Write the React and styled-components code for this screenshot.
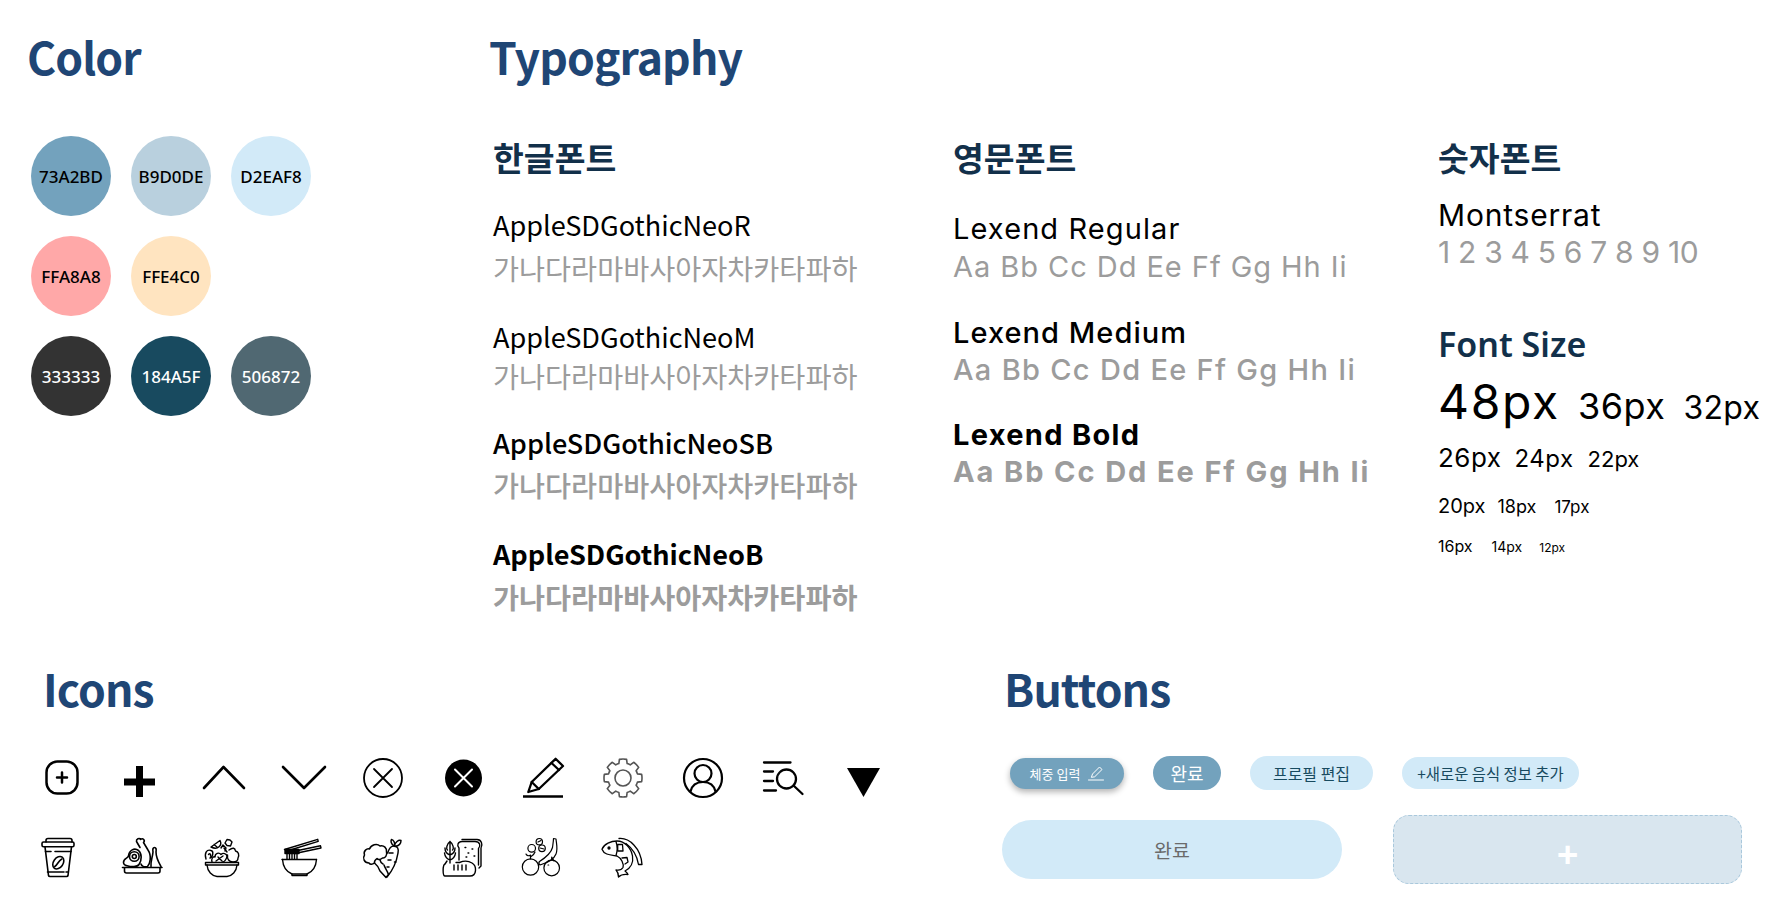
import React from "react";
import styled, { createGlobalStyle } from "styled-components";

const KR = `"Noto Sans CJK KR", "Noto Sans", sans-serif`;
const LATIN = `"Noto Sans", "Noto Sans CJK KR", sans-serif`;
const GEO = `Inter, "Noto Sans", sans-serif`;

const Global = createGlobalStyle`
  html, body { margin: 0; padding: 0; background: #fff; }
  * { box-sizing: border-box; }
`;

const Page = styled.div`
  width: 1765px;
  height: 903px;
  overflow: hidden;
  padding: 27px 0 0 27px;
  font-family: ${KR};
  color: #000;
`;
const Top = styled.div`
  display: flex;
  height: 632px;
`;
const ColorCol = styled.section`
  width: 462px;
  flex: none;
`;
const Title = styled.h1`
  margin: 0;
  font-family: ${KR};
  font-size: 44.5px;
  line-height: 58px;
  font-weight: 700;
  letter-spacing: -0.9px;
  color: #1f4675;
`;
const Swatches = styled.div`
  display: grid;
  grid-template-columns: repeat(3, 80px);
  gap: 20px;
  margin: 51px 0 0 4px;
`;
const Swatch = styled.div`
  width: 80px;
  height: 80px;
  border-radius: 50%;
  background: ${(p) => p.$bg};
  color: ${(p) => p.$fg};
  display: flex;
  align-items: center;
  justify-content: center;
  font-family: ${LATIN};
  font-size: 17px;
  font-weight: 500;
  grid-column: ${(p) => p.$col || "auto"};
`;
const TypeCol = styled.section`
  flex: 1;
  min-width: 0;
`;
const FontCols = styled.div`
  display: flex;
  margin: 50px 0 0 4px;
`;
const FontCol = styled.div`
  width: ${(p) => p.$w}px;
  flex: none;
`;
const Sub = styled.h2`
  margin: 0;
  font-family: ${KR};
  font-size: 33.5px;
  line-height: 44px;
  font-weight: 700;
  color: #12304a;
`;
const KName = styled.div`
  font-family: ${KR};
  font-size: 27.1px;
  line-height: 40px;
  font-weight: ${(p) => p.$w};
  color: #000;
  white-space: nowrap;
  margin-top: ${(p) => p.$mt}px;
`;
const KGlyphs = styled.div`
  font-family: ${KR};
  font-size: 28.3px;
  line-height: 40px;
  font-weight: ${(p) => p.$w};
  color: #9c9c9c;
  white-space: nowrap;
  margin-top: ${(p) => p.$mt}px;
`;
const EName = styled.div`
  font-family: ${GEO};
  font-size: 29px;
  line-height: 40px;
  font-weight: ${(p) => p.$w};
  letter-spacing: ${(p) => p.$ls}px;
  white-space: nowrap;
  margin-top: ${(p) => p.$mt}px;
`;
const EGlyphs = styled.div`
  font-family: ${GEO};
  font-size: 29px;
  line-height: 40px;
  font-weight: ${(p) => p.$w};
  letter-spacing: ${(p) => p.$ls}px;
  color: #9c9c9c;
  white-space: nowrap;
  margin-top: ${(p) => p.$mt}px;
`;
const Mont = styled.div`
  font-family: ${GEO};
  font-size: 30px;
  line-height: 36px;
  letter-spacing: 0.8px;
  margin-top: 18px;
`;
const Numbers = styled.div`
  font-family: ${GEO};
  font-size: 30px;
  line-height: 36px;
  color: #9c9c9c;
  letter-spacing: -0.3px;
  white-space: nowrap;
  margin-top: 1px;
`;
const SizeTitle = styled.h2`
  margin: 52px 0 0;
  font-family: ${LATIN};
  font-size: 34px;
  line-height: 44px;
  font-weight: 600;
  color: #12304a;
`;
const SizeRow = styled.div`
  display: flex;
  align-items: baseline;
  font-family: ${GEO};
  height: ${(p) => p.$h}px;
  margin-top: ${(p) => p.$mt}px;
  white-space: nowrap;
`;
const Size = styled.span`
  font-size: ${(p) => p.$s}px;
  letter-spacing: ${(p) => p.$ls || 0}px;
  margin-left: ${(p) => p.$ml || 0}px;
  line-height: 1;
`;

const Bottom = styled.div`
  display: flex;
`;
const IconsCol = styled.section`
  width: 977px;
  flex: none;
  padding-left: 16px;
`;
const ButtonsCol = styled.section``;
const IconGrid = styled.div`
  display: grid;
  grid-template-columns: repeat(11, 40px);
  grid-auto-rows: 40px;
  gap: 40px;
  margin-top: 41px;
`;
const Glyph = styled.svg`
  width: 40px;
  height: 40px;
  overflow: visible;
  display: block;
  fill: none;
  stroke: ${(p) => p.$stroke || "#000"};
  stroke-width: ${(p) => p.$sw || 1.5};
  stroke-linecap: round;
  stroke-linejoin: round;
`;
const SmallGlyph = styled(Glyph)`
  width: 16px;
  height: 16px;
`;
const PillRow = styled.div`
  display: flex;
  align-items: center;
  gap: 29px;
  margin: 39px 0 0 6px;
  height: 34px;
`;
const Pill = styled.button`
  border: 0;
  padding: 0;
  display: flex;
  align-items: center;
  justify-content: center;
  gap: ${(p) => p.$gap || 0}px;
  width: ${(p) => p.$w}px;
  height: ${(p) => p.$h}px;
  border-radius: 999px;
  background: ${(p) => p.$bg};
  color: ${(p) => p.$fg};
  font-family: ${KR};
  font-size: ${(p) => p.$fs}px;
  font-weight: ${(p) => p.$fw || 400};
  box-shadow: ${(p) => (p.$raised ? "0 3px 6px rgba(0,0,0,.3)" : "none")};
  white-space: nowrap;
`;
const BigRow = styled.div`
  display: flex;
  align-items: center;
  gap: 51px;
  margin: 25px 0 0 -2px;
`;
const Wide = styled.button`
  width: 340px;
  height: 59px;
  border: 0;
  border-radius: 30px;
  background: #d2eaf8;
  color: #6b6b6b;
  font-family: ${KR};
  font-size: 19.5px;
`;
const Dashed = styled.button`
  width: 349px;
  height: 69px;
  border: 1.5px dashed #a9c8dc;
  border-radius: 16px;
  background: #d9e6ef;
  color: #fff;
  font-family: ${LATIN};
  font-size: 38px;
  font-weight: 700;
  line-height: 1;
  padding: 6px 0 0;
`;

const gearPath = (() => {
  const n = 8;
  const pol = (r, a) => `${(20 + r * Math.cos(a)).toFixed(2)} ${(20 + r * Math.sin(a)).toFixed(2)}`;
  let d = "";
  for (let i = 0; i < n; i++) {
    const c = (i * 2 * Math.PI) / n - Math.PI / 2;
    const w = 0.19;
    const s = 0.28;
    const p1 = pol(15, c - s);
    const p2 = pol(19, c - w);
    const p3 = pol(19, c + w);
    const p4 = pol(15, c + s);
    const nextStart = pol(15, c + (2 * Math.PI) / n - s);
    d += `${i === 0 ? "M" + p1 : ""} L${p2} A19 19 0 0 1 ${p3} L${p4} A15 15 0 0 1 ${nextStart} `;
  }
  return d + "Z";
})();

const icons = [
  <Glyph key="a" viewBox="0 0 40 40" $sw={2.5}>
    <rect x="3.500" y="3.500" width="31" height="32" rx="11" />
    <path d="M19 14.500v10M14 19.500h10" />
  </Glyph>,
  <Glyph key="b" viewBox="0 0 40 40" $stroke="none">
    <path d="M13 8h7v12.500h12v7H20V39h-7V27.500H1v-7h12z" fill="#000" />
  </Glyph>,
  <Glyph key="c" viewBox="0 0 40 40" $sw={2.6}>
    <path d="M1 30 20.500 9 41 30" />
  </Glyph>,
  <Glyph key="d" viewBox="0 0 40 40" $sw={2.6}>
    <path d="M0 9 21 30 42 9" />
  </Glyph>,
  <Glyph key="e" viewBox="0 0 40 40" $sw={1.8}>
    <circle cx="20" cy="20" r="19" />
    <path d="M11 11 29 29M29 11 11 29" />
  </Glyph>,
  <Glyph key="f" viewBox="0 0 40 40" $stroke="#fff" $sw={2}>
    <circle cx="20.500" cy="20" r="18.500" fill="#000" stroke="none" />
    <path d="M12 11.500 29 28.500M29 11.500 12 28.500" />
  </Glyph>,
  <Glyph key="g" viewBox="0 0 40 40" $sw={2.3}>
    <path d="M5.300 34 8.700 24 32.600.8 40 8 15.800 31Z" />
    <path d="M8.700 24 15.800 31M28.500 5 36 12" />
    <path d="M0 38.500H40" strokeLinecap="butt" />
  </Glyph>,
  <Glyph key="h" viewBox="0 0 40 40" $stroke="#555" $sw={1.6}>
    <path d={gearPath} />
    <circle cx="20" cy="20" r="8" />
  </Glyph>,
  <Glyph key="i" viewBox="0 0 40 40" $sw={2.2}>
    <circle cx="20" cy="20" r="19" />
    <circle cx="20" cy="15.500" r="8.500" />
    <path d="M7.500 33.500C9 27 13.500 24 20 24S31 27 32.500 33.500" />
  </Glyph>,
  <Glyph key="j" viewBox="0 0 40 40" $sw={2.3}>
    <path d="M1 4.500H27.500M1 13.500H10M1 23H10M1 32.500H13" />
    <circle cx="23.500" cy="21" r="9.500" />
    <path d="M30.500 27.500 39.500 36" />
  </Glyph>,
  <Glyph key="k" viewBox="0 0 40 40" $stroke="none">
    <path d="M4 10H37L20.500 39Z" fill="#000" />
  </Glyph>,
  /* coffee */
  <Glyph key="l" viewBox="0 0 40 40" $sw={1.6}>
    <path d="M3 4V2.500Q3 .5 5 .5H27Q29 .5 29 2.500V4" />
    <rect x="-1" y="4" width="32" height="4.800" rx="1.500" />
    <path d="M2 8.800 5.500 37.500Q5.700 38.500 7 38.500H23.500Q24.800 38.500 25 37.500L28.500 8.800" />
    <path d="M2.500 13.500H8M12 13.500H28M4.500 34H21M23 34H25" />
    <ellipse cx="15.300" cy="24.700" rx="4.800" ry="6.800" transform="rotate(35 15.300 24.700)" />
    <path d="M11.800 28.500C15 26.500 15 23 18.800 21" />
  </Glyph>,
  /* meat */
  <Glyph key="m" viewBox="0 0 40 40" $sw={1.6}>
    <path d="M-.5 29.500H39M1.500 29.500V33Q1.500 35 3.500 35H35Q37 35 37 33V29.500" />
    <path d="M.5 24.500C.5 20 5 20.500 5.500 18C6 12 11.500 9.500 15.500 12.500C19 15.500 19 22 16 26.500C14.500 29 8 29 5 28C2.500 27.500.5 27 .5 24.500Z" />
    <circle cx="11.300" cy="18.500" r="4.800" />
    <circle cx="11.300" cy="18.500" r="2" />
    <path d="M17 9.500 13.500 3.500C13 1 16.500-.5 17.500 1.500C20-.5 22.500 2.500 20.500 4.500L25 12C29 18 27 26 24.500 28.500C21 29.500 18.500 28 18 26" />
    <path d="M28 28.500C27.500 22 29.500 20 30 14C29.500 11 30 9.500 31.500 9.500S33.500 11 33 14C33 20 36 25 38 28.500" />
  </Glyph>,
  /* salad */
  <Glyph key="n" viewBox="0 0 40 40" $sw={1.4}>
    <path d="M2.500 24.500H35.500V27H2.500Z" />
    <path d="M4 27C4.500 33.500 9 38 14 38.500H24C29 38 33.500 33.500 34 27" />
    <path d="M8 9 17 2.500C19.500 7 15 12.500 8 9ZM11 6.500 14 9" />
    <path d="M3 21C1 15 4 11 8 12.500C11 13 10 19 7 20M5.500 16.500C6.500 15 8 16 7.500 18" />
    <path d="M9 24C8 21 10 18 12 19C12 15 16 14 18 16.500C20 14.500 23.500 15.500 24 18C24 21 21 24 20 24M13 23 20 18M15 19 19 23" />
    <path d="M22 5 24 1.500 27 2 29 4 27.500 8 24 7.500Z" />
    <path d="M21 10 24 14M26 12C30 9 32 10 32.500 13C35.500 13.500 36.500 17 35 20C35 23 32.500 24 30 24C26 24 24 21 24.500 17" />
    <path d="M18 10 20 7 23 10 22 13" />
  </Glyph>,
  /* noodles */
  <Glyph key="o" viewBox="0 0 40 40" $sw={1.4}>
    <path d="M1.500 11.500 34.700 1.300 35.200 3.300 4 13M3 15 37.500 7.800 38 10 12 15.500" />
    <path d="M2 11.500H16V15.500H2Z" fill="#000" />
    <path d="M4 15V21M6.500 15V21M9 15V21M11.500 15V21M14 15V21" />
    <path d="M-1 21.500H33.500" />
    <path d="M-.5 21.500C0 29 4 34 9 36H24C29 34 33 29 33.500 21.500" />
    <path d="M9 36V37.500H24V36" />
  </Glyph>,
  /* broccoli + carrot */
  <Glyph key="p" viewBox="0 0 40 40" $sw={1.5}>
    <path d="M6 25C1 25-.5 20 1.500 17C0 13 4 10 6.500 11C8 6.500 14 5 17 8C21 7 24 10 23.500 14C24.500 17 22 20.500 19.500 20C17 22 15 22 14 20.500C12 22 11 23 11.500 25C9 27 7 26.500 6 25Z" />
    <path d="M11.500 25C14 27 16 30 17 33L23 39.500 25.500 36.500C24 32 22 30 21 27" />
    <path d="M17 22C17.500 24 18.500 25.500 20 26" />
    <path d="M24.500 15C26.500 9.500 28 8 31 8C34.500 8 36 11 35 15C33.500 24 30 32 24 39" />
    <path d="M26 15H30M25 22H28M31.500 24H33M24 29H26" />
    <path d="M31 8C28 6 27.500 3 28.500 1.500C31 2 32 5 31.500 7.500C32 4.500 35.500 1.500 38 2.500C38 6 35 8 32 8.500" />
  </Glyph>,
  /* bread */
  <Glyph key="q" viewBox="0 0 40 40" $sw={1.4}>
    <path d="M7 3.500C3.500 6 3 11 4.500 12M7 3.500C10.500 6 11 11 9.500 12M2 10C2 13 4 16 7 17C10 16 12 13 12 10M1.500 15C2 19 4 21 7 22C10 21 12 19 12.500 15M7 5V25" />
    <path d="M4 23 2 26C-.5 27 -.5 38 2 38H27C34 38 34 28 29 25 25 22.500 20 23 16.500 24.500H13" />
    <path d="M11 27V32M15 27V32M19 27V32M23 27V32" />
    <path d="M16 22V10C13.500 7.500 15 3.500 19 3.500H32C37 3.500 38 8 35.500 10.500V27" />
    <path d="M19 1.500H34C38.500 1.500 40 6.500 38 10V28L36 30" />
    <path d="M22 9.500h.8M29 11h.8M25 15h.8M31 18h.8M23 19h.8" />
  </Glyph>,
  /* fruit */
  <Glyph key="r" viewBox="0 0 40 40" $sw={1.2}>
    <circle cx="7.500" cy="29" r="8.200" />
    <circle cx="28.700" cy="30" r="7.800" />
    <circle cx="8.700" cy="10.300" r="3.800" />
    <circle cx="16.300" cy="3.700" r="3.200" />
    <circle cx="19" cy="10.300" r="3.300" />
    <path d="M15 4 18 2.500M17 10 21 11" />
    <path d="M7.500 21V17C6 18.500 3.500 17.500 3 16M7.500 19C9.500 18 11 17 12 14" />
    <path d="M30.500.5 33 1C33.500 6 35 11 33 16C31 21 24 25 17 27C16 26 15.500 24.500 16.500 23.500C22 20 28 15 29.500 9.500C30 6 30.500 3 30.500.5Z" />
    <path d="M28.700 22V19L31 23M25 27h.7" />
  </Glyph>,
  /* fish */
  <Glyph key="s" viewBox="0 0 40 40" $sw={1.3}>
    <path d="M-1 11.300C1 6 8 3 14 3C22 3 28 10 29.500 18C30.500 24 28 30 22 33C24 34.500 24.700 35.500 25 36.500C21 36 18 36.500 15.500 39C15.500 36 15 34 13 32C15.500 32.500 18.500 32 20 29.500C21 26 18.500 20 14 18C8 17 1 17-1 11.300Z" />
    <path d="M16 .5C26-.5 38 10 39 26.500H35.500C34 17 29 10 23 5.500" />
    <path d="M13 3.500C14.500 8 14.500 13 13 17.500" />
    <circle cx="6" cy="10" r="1" fill="#000" />
    <path d="M14.700 6.500H19.500L20 13H14.700Z" />
    <path d="M19 20 24 19.500 25 24 22 26" />
  </Glyph>,
];

const koreanRows = [
  ["AppleSDGothicNeoR", 400, 26, 3],
  ["AppleSDGothicNeoM", 400, 29, -1],
  ["AppleSDGothicNeoSB", 500, 27, 2],
  ["AppleSDGothicNeoB", 600, 29, 3],
];
const englishRows = [
  ["Lexend Regular", 400, 30, -2, 1.1, 0.95],
  ["Lexend Medium", 500, 26, -3, 1.05, 1.3],
  ["Lexend Bold", 700, 25, -3, 1.3, 1.9],
];
const HANGUL = "가나다라마바사아자차카타파하";
const LATIN_PAIRS = "Aa Bb Cc Dd Ee Ff Gg Hh Ii";

const swatches = [
  ["73A2BD", "#73a2bd", "#000"],
  ["B9D0DE", "#b9d0de", "#000"],
  ["D2EAF8", "#d2eaf8", "#000"],
  ["FFA8A8", "#ffa8a8", "#000"],
  ["FFE4C0", "#ffe4c0", "#000"],
  ["333333", "#333333", "#fff", 1],
  ["184A5F", "#184a5f", "#fff"],
  ["506872", "#506872", "#fff"],
];

export default function App() {
  return (
    <Page>
      <Global />
      <Top>
        <ColorCol>
          <Title>Color</Title>
          <Swatches>
            {swatches.map(([t, bg, fg, col]) => (
              <Swatch key={t} $bg={bg} $fg={fg} $col={col}>
                {t}
              </Swatch>
            ))}
          </Swatches>
        </ColorCol>
        <TypeCol>
          <Title>Typography</Title>
          <FontCols>
            <FontCol $w={460}>
              <Sub>한글폰트</Sub>
              {koreanRows.map(([n, w, mt, gmt]) => (
                <React.Fragment key={n}>
                  <KName $w={w} $mt={mt}>{n}</KName>
                  <KGlyphs $w={w} $mt={gmt}>{HANGUL}</KGlyphs>
                </React.Fragment>
              ))}
            </FontCol>
            <FontCol $w={485}>
              <Sub>영문폰트</Sub>
              {englishRows.map(([n, w, mt, gmt, ls, gls]) => (
                <React.Fragment key={n}>
                  <EName $w={w} $mt={mt} $ls={ls}>{n}</EName>
                  <EGlyphs $w={w} $mt={gmt} $ls={gls}>{LATIN_PAIRS}</EGlyphs>
                </React.Fragment>
              ))}
            </FontCol>
            <FontCol $w={326}>
              <Sub>숫자폰트</Sub>
              <Mont>Montserrat</Mont>
              <Numbers>1 2 3 4 5 6 7 8 9 10</Numbers>
              <SizeTitle>Font Size</SizeTitle>
              <SizeRow $h={50} $mt={12}>
                <Size $s={48} $ls={1.7}>48px</Size>
                <Size $s={36} $ml={18} $ls={0.5}>36px</Size>
                <Size $s={32} $ml={18} $ls={0.3}>32px</Size>
              </SizeRow>
              <SizeRow $h={32} $mt={17}>
                <Size $s={26} $ls={0.5}>26px</Size>
                <Size $s={24} $ml={13} $ls={0.5}>24px</Size>
                <Size $s={22} $ml={14}>22px</Size>
              </SizeRow>
              <SizeRow $h={26} $mt={19}>
                <Size $s={20}>20px</Size>
                <Size $s={18} $ml={12}>18px</Size>
                <Size $s={17} $ml={18}>17px</Size>
              </SizeRow>
              <SizeRow $h={20} $mt={16}>
                <Size $s={16}>16px</Size>
                <Size $s={14} $ml={19}>14px</Size>
                <Size $s={12} $ml={17}>12px</Size>
              </SizeRow>
            </FontCol>
          </FontCols>
        </TypeCol>
      </Top>
      <Bottom>
        <IconsCol>
          <Title>Icons</Title>
          <IconGrid>{icons}</IconGrid>
        </IconsCol>
        <ButtonsCol>
          <Title>Buttons</Title>
          <PillRow>
            <Pill $w={114} $h={31} $bg="#73a2bd" $fg="#fff" $fs={13} $gap={8} $raised>
              체중 입력
              <SmallGlyph viewBox="0 0 16 16" $stroke="#fff" $sw={1}>
                <path d="M3.500 12 4.500 9 11.500 2 14 4.500 7 11.500Z" />
                <path d="M.5 15H15.500" />
              </SmallGlyph>
            </Pill>
            <Pill $w={68} $h={34} $bg="#73a2bd" $fg="#fff" $fs={18}>완료</Pill>
            <Pill $w={123} $h={34} $bg="#d2eaf8" $fg="#184a5f" $fs={16}>프로필 편집</Pill>
            <Pill $w={177} $h={32} $bg="#d2eaf8" $fg="#184a5f" $fs={15.4}>+새로운 음식 정보 추가</Pill>
          </PillRow>
          <BigRow>
            <Wide>완료</Wide>
            <Dashed>+</Dashed>
          </BigRow>
        </ButtonsCol>
      </Bottom>
    </Page>
  );
}
